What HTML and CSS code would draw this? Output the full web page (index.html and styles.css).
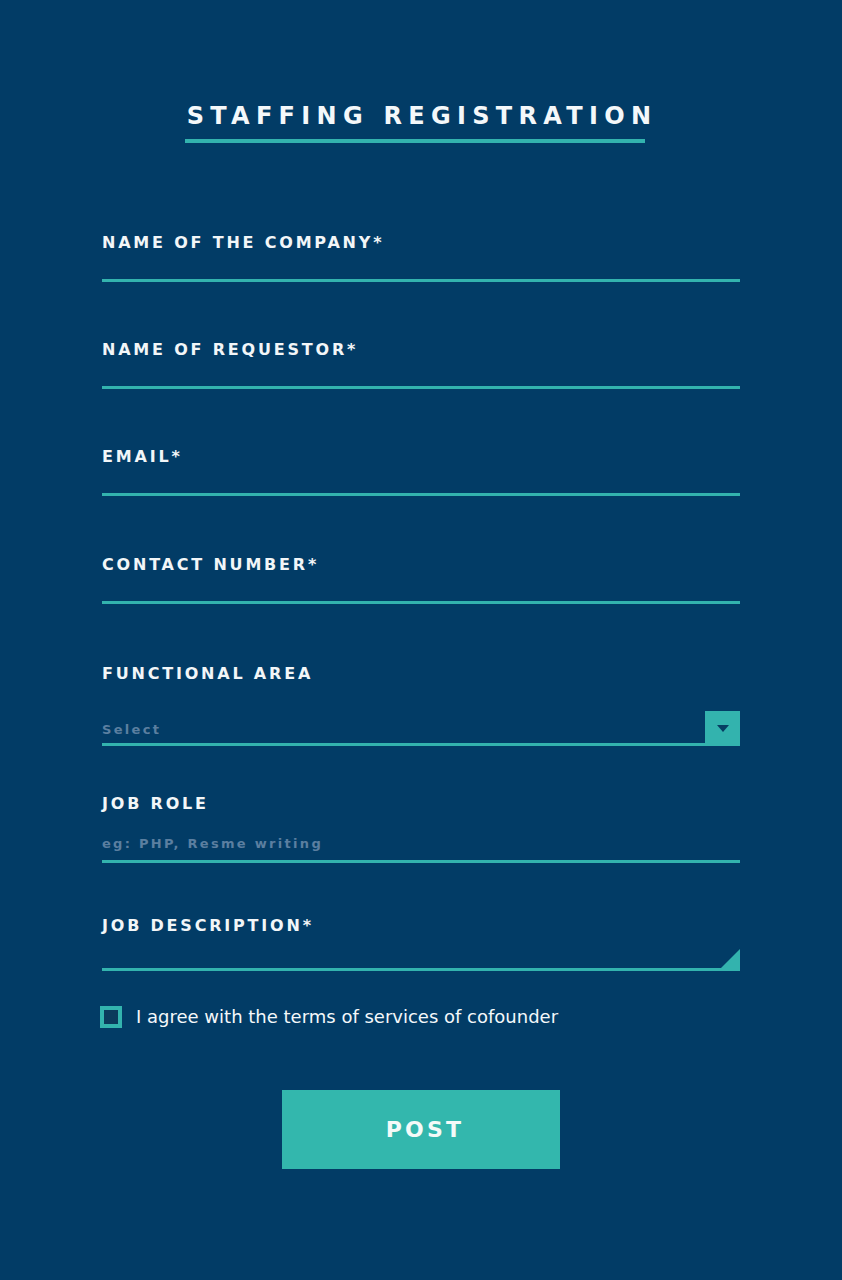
FILE: index.html
```html
<!DOCTYPE html>
<html lang="en">
<head>
<meta charset="utf-8">
<title>Staffing Registration</title>
<link rel="stylesheet" href="styles.css">
</head>
<body>
<main class="page">
  <header class="heading">
    <h1 class="title">STAFFING REGISTRATION</h1>
    <div class="title-bar"></div>
  </header>
  <form class="form">
    <div class="field field-first">
      <label class="label">NAME OF THE COMPANY*</label>
      <div class="input"></div>
    </div>
    <div class="field">
      <label class="label">NAME OF REQUESTOR*</label>
      <div class="input"></div>
    </div>
    <div class="field">
      <label class="label">EMAIL*</label>
      <div class="input"></div>
    </div>
    <div class="field field-contact">
      <label class="label">CONTACT NUMBER*</label>
      <div class="input"></div>
    </div>
    <div class="field field-area">
      <label class="label">FUNCTIONAL AREA</label>
      <div class="select">
        <span class="placeholder">Select</span>
        <span class="select-btn"><svg width="12" height="7" viewBox="0 0 12 7"><path d="M0 0H12L6 7Z" fill="#063d62"/></svg></span>
      </div>
    </div>
    <div class="field field-role">
      <label class="label">JOB ROLE</label>
      <div class="input input-role"><span class="placeholder">eg: PHP, Resme writing</span></div>
    </div>
    <div class="field field-desc">
      <label class="label">JOB DESCRIPTION*</label>
      <div class="input input-desc"><span class="resize"></span></div>
    </div>
    <div class="agree">
      <span class="checkbox"></span>
      <span class="agree-text">I agree with the terms of services of cofounder</span>
    </div>
    <div class="actions">
      <button type="button" class="post">POST</button>
    </div>
  </form>
</main>
</body>
</html>
```

FILE: styles.css
```css
html, body {
  margin: 0;
  padding: 0;
}
body {
  background: #023c66;
  font-family: "DejaVu Sans", "Noto Sans", sans-serif;
  color: #f2f6f8;
}
.page {
  width: 638px;
  height: 1280px;
  margin: 0 auto;
  display: flex;
  flex-direction: column;
}
.heading {
  display: flex;
  flex-direction: column;
  align-items: center;
  padding-top: 101px;
}
.title {
  margin: 0;
  font-size: 24px;
  line-height: 30px;
  font-weight: 700;
  letter-spacing: 6.3px;
  color: #f4f8fa;
  padding-left: 2px;
}
.title-bar {
  width: 460px;
  height: 4px;
  background: #33b3ae;
  margin-top: 8px;
  margin-left: -12px;
}
.form {
  display: flex;
  flex-direction: column;
}
.field {
  display: flex;
  flex-direction: column;
  margin-top: 56px;
}
.field-first {
  margin-top: 88px;
}
.field-contact {
  margin-top: 57px;
}
.label {
  font-size: 16px;
  line-height: 20px;
  font-weight: 700;
  letter-spacing: 2.8px;
  color: #f2f6f8;
  padding-top: 2px;
}
.input {
  height: 26px;
  border-bottom: 3px solid #33b3ae;
  position: relative;
}
.field-area {
  margin-top: 58px;
}
.select {
  margin-top: 27px;
  height: 32px;
  border-bottom: 3px solid #33b3ae;
  display: flex;
  align-items: center;
  justify-content: space-between;
}
.placeholder {
  font-size: 13px;
  font-weight: 700;
  letter-spacing: 2.3px;
  color: #5b7fa0;
}
.select .placeholder {
  padding-top: 4px;
}
.select-btn {
  width: 35px;
  height: 35px;
  background: #33b3ae;
  display: flex;
  align-items: center;
  justify-content: center;
  align-self: flex-start;
}
.field-role {
  margin-top: 46px;
}
.input-role {
  height: 46px;
  display: flex;
  align-items: flex-end;
}
.input-role .placeholder {
  line-height: 20px;
  margin-bottom: 6px;
}
.field-desc {
  margin-top: 51px;
}
.input-desc {
  height: 32px;
}
.resize {
  position: absolute;
  right: 0;
  bottom: 0;
  width: 0;
  height: 0;
  border-left: 19px solid transparent;
  border-bottom: 19px solid #33b3ae;
}
.agree {
  display: flex;
  align-items: center;
  gap: 14px;
  margin-top: 35px;
  margin-left: -2px;
}
.checkbox {
  width: 14px;
  height: 14px;
  border: 4px solid #33b3ae;
  background: #0b3a5c;
}
.agree-text {
  font-size: 18px;
  line-height: 22px;
  font-weight: 400;
  color: #f4f8fa;
}
.actions {
  display: flex;
  justify-content: center;
  margin-top: 62px;
}
.post {
  width: 278px;
  height: 79px;
  border: 0;
  background: #33b7ad;
  color: #f4faf8;
  font-family: "DejaVu Sans", "Noto Sans", sans-serif;
  font-size: 22px;
  font-weight: 700;
  letter-spacing: 3.2px;
  padding: 0 0 0 8px;
  cursor: pointer;
}
```
